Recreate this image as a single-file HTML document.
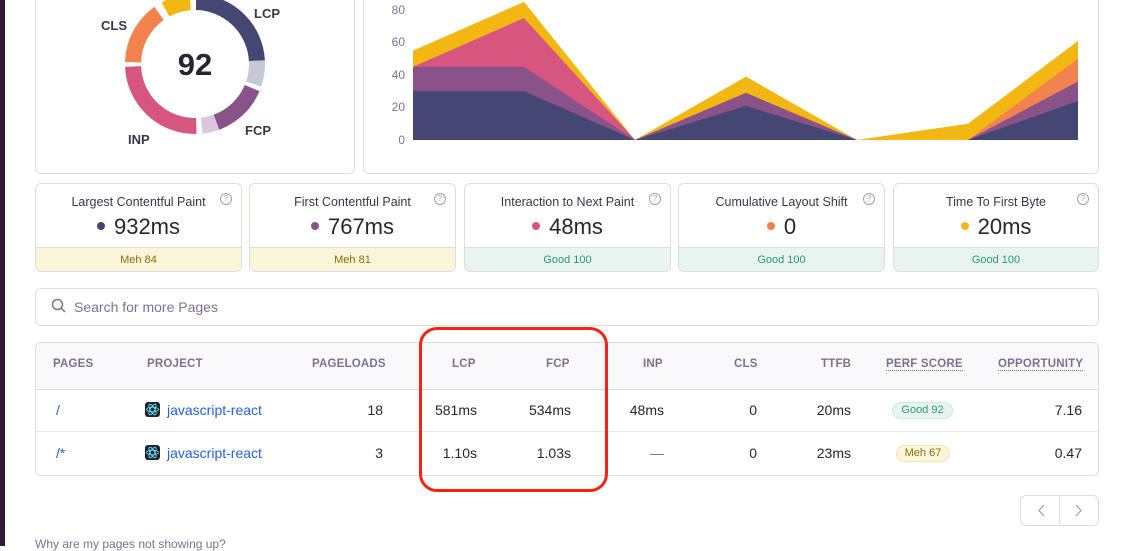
<!DOCTYPE html>
<html><head><meta charset="utf-8"><style>
*{box-sizing:border-box;margin:0;padding:0}
body{width:1123px;height:546px;overflow:hidden;background:#fff;font-family:"Liberation Sans",sans-serif;color:#2b2233;position:relative}
.abs{position:absolute}
.card{position:absolute;border:1px solid #e0dce5;border-radius:6px;background:#fff}
.m{position:absolute;top:183px;height:89px;width:207px;border:1px solid #e0dce5;border-radius:6px;overflow:hidden;text-align:center}
.m .t{font-size:12.5px;color:#3e3446;margin-top:11px}
.m .v{font-size:22px;color:#2b2233;margin-top:5px}
.m .v i{display:inline-block;width:8px;height:8px;border-radius:50%;vertical-align:middle;margin-right:9px;position:relative;top:-2px}
.m .b{position:absolute;left:0;right:0;bottom:0;height:24px;font-size:11px;line-height:24px;border-top:1px solid #e0dce5}
.meh{background:#fbf5d9;color:#8a6d0e}
.good{background:#e7f4f0;color:#2b9a6f}
.m .q{position:absolute;right:9px;top:9px;width:12px;height:12px;border:1px solid #a59fb0;border-radius:50%;font-size:8px;line-height:10px;color:#a59fb0}
.th{position:absolute;top:358px;font-size:11.5px;font-weight:bold;color:#80708f;letter-spacing:.2px}
.td{position:absolute;font-size:14px;color:#2b2233}
.lk{color:#2562d4}
.dot{border-bottom:1px dotted #80708f}
</style></head><body>
<div class="abs" style="left:0;top:0;width:5px;height:546px;background:#2f1937"></div>
<div class="card" style="left:35px;top:-10px;width:320px;height:184px"></div>
<div class="card" style="left:363px;top:-10px;width:736px;height:184px"></div>
<svg class="abs" style="left:0;top:0" width="1123" height="180">
<g transform="rotate(-90 195 64)" fill="none" stroke-width="16">
<circle cx="195" cy="64" r="62" pathLength="360" stroke="#444674" stroke-dasharray="86 360" stroke-dashoffset="-1"/>
<circle cx="195" cy="64" r="62" pathLength="360" stroke="#c6c8d6" stroke-dasharray="22 360" stroke-dashoffset="-87"/>
<circle cx="195" cy="64" r="62" pathLength="360" stroke="#895289" stroke-dasharray="47 360" stroke-dashoffset="-113"/>
<circle cx="195" cy="64" r="62" pathLength="360" stroke="#dbc6db" stroke-dasharray="14 360" stroke-dashoffset="-160"/>
<circle cx="195" cy="64" r="62" pathLength="360" stroke="#d6567f" stroke-dasharray="89 360" stroke-dashoffset="-179"/>
<circle cx="195" cy="64" r="62" pathLength="360" stroke="#f2824e" stroke-dasharray="53 360" stroke-dashoffset="-272"/>
<circle cx="195" cy="64" r="62" pathLength="360" stroke="#f2b712" stroke-dasharray="24 360" stroke-dashoffset="-332"/>
</g>
<text x="195" y="75" text-anchor="middle" font-size="31" font-weight="bold" fill="#2b2233" font-family="Liberation Sans">92</text>
<g font-size="13" font-weight="bold" fill="#3e3446" font-family="Liberation Sans">
<text x="254" y="18">LCP</text><text x="101" y="30">CLS</text><text x="245" y="135">FCP</text><text x="128" y="144">INP</text></g>
<g font-size="12" fill="#80708f" font-family="Liberation Sans" text-anchor="end">
<text x="405" y="14">80</text><text x="405" y="46">60</text><text x="405" y="79">40</text><text x="405" y="111">20</text><text x="405" y="144">0</text></g>
<polygon fill="#f2b712" points="413,50.6 524,1.9 635,140 746,76.6 857,140 968,123.7 1078,40.9 1078,140 413,140"/>
<polygon fill="#f2824e" points="413,66.9 524,18.1 635,140 746,92.9 857,140 968,140 1078,58.7 1078,140 413,140"/>
<polygon fill="#d6567f" points="413,66.9 524,18.1 635,140 746,92.9 857,140 968,140 1078,81.5 1078,140 413,140"/>
<polygon fill="#895289" points="413,66.9 524,66.9 635,140 746,92.9 857,140 968,140 1078,81.5 1078,140 413,140"/>
<polygon fill="#444674" points="413,91.2 524,91.2 635,140 746,105.9 857,140 968,140 1078,101 1078,140 413,140"/>
</svg>

<div class="m" style="left:35px"><div class="q">?</div><div class="t">Largest Contentful Paint</div><div class="v"><i style="background:#444674"></i>932ms</div><div class="b meh">Meh 84</div></div>
<div class="m" style="left:249px"><div class="q">?</div><div class="t">First Contentful Paint</div><div class="v"><i style="background:#895289"></i>767ms</div><div class="b meh">Meh 81</div></div>
<div class="m" style="left:464px"><div class="q">?</div><div class="t">Interaction to Next Paint</div><div class="v"><i style="background:#d6567f"></i>48ms</div><div class="b good">Good 100</div></div>
<div class="m" style="left:678px"><div class="q">?</div><div class="t">Cumulative Layout Shift</div><div class="v"><i style="background:#f2824e"></i>0</div><div class="b good">Good 100</div></div>
<div class="m" style="left:893px;width:206px"><div class="q">?</div><div class="t">Time To First Byte</div><div class="v"><i style="background:#f2b712"></i>20ms</div><div class="b good">Good 100</div></div>

<div class="card" style="left:35px;top:288px;width:1064px;height:38px"></div>
<svg class="abs" style="left:51px;top:298px" width="16" height="16"><circle cx="6.5" cy="6.5" r="5" fill="none" stroke="#80708f" stroke-width="1.5"/><line x1="10" y1="10" x2="14" y2="14" stroke="#80708f" stroke-width="1.5"/></svg>
<div class="abs" style="left:74px;top:299px;font-size:14px;color:#80708f">Search for more Pages</div>

<div class="card" style="left:35px;top:342px;width:1064px;height:134px;overflow:hidden">
<div style="height:47px;background:#f9f8fb;border-bottom:1px solid #e0dce5"></div>
<div style="height:42px;border-bottom:1px solid #e9e6ee"></div></div>
<div class="th" style="left:53px">PAGES</div>
<div class="th" style="left:147px">PROJECT</div>
<div class="th" style="left:312px">PAGELOADS</div>
<div class="th" style="left:452px">LCP</div>
<div class="th" style="left:546px">FCP</div>
<div class="th" style="left:643px">INP</div>
<div class="th" style="left:734px">CLS</div>
<div class="th" style="left:821px">TTFB</div>
<div class="th dot" style="left:886px">PERF SCORE</div>
<div class="th dot" style="left:998px">OPPORTUNITY</div>

<div class="td lk" style="left:56px;top:402px">/</div>
<div class="td lk" style="left:56px;top:445px">/*</div>
<svg class="abs" style="left:145px;top:402px" width="15" height="15"><rect width="15" height="15" rx="3" fill="#20232a"/><g fill="none" stroke="#61dafb" stroke-width=".9"><ellipse cx="7.5" cy="7.5" rx="6" ry="2.3"/><ellipse cx="7.5" cy="7.5" rx="6" ry="2.3" transform="rotate(60 7.5 7.5)"/><ellipse cx="7.5" cy="7.5" rx="6" ry="2.3" transform="rotate(-60 7.5 7.5)"/></g></svg>
<svg class="abs" style="left:145px;top:445px" width="15" height="15"><rect width="15" height="15" rx="3" fill="#20232a"/><g fill="none" stroke="#61dafb" stroke-width=".9"><ellipse cx="7.5" cy="7.5" rx="6" ry="2.3"/><ellipse cx="7.5" cy="7.5" rx="6" ry="2.3" transform="rotate(60 7.5 7.5)"/><ellipse cx="7.5" cy="7.5" rx="6" ry="2.3" transform="rotate(-60 7.5 7.5)"/></g></svg>
<div class="td lk" style="left:167px;top:402px">javascript-react</div>
<div class="td lk" style="left:167px;top:445px">javascript-react</div>

<div class="td" style="right:740px;top:402px">18</div>
<div class="td" style="right:740px;top:445px">3</div>
<div class="td" style="right:646px;top:402px">581ms</div>
<div class="td" style="right:646px;top:445px">1.10s</div>
<div class="td" style="right:552px;top:402px">534ms</div>
<div class="td" style="right:552px;top:445px">1.03s</div>
<div class="td" style="right:459px;top:402px">48ms</div>
<div class="td" style="right:459px;top:445px;color:#80708f">—</div>
<div class="td" style="right:366px;top:402px">0</div>
<div class="td" style="right:366px;top:445px">0</div>
<div class="td" style="right:272px;top:402px">20ms</div>
<div class="td" style="right:272px;top:445px">23ms</div>
<div class="abs" style="left:892px;top:402px;width:61px;height:17px;border-radius:9px;background:#e7f4f0;border:1px solid #cfeade;color:#2b9a6f;font-size:11px;text-align:center;line-height:15px">Good 92</div>
<div class="abs" style="left:896px;top:445px;width:54px;height:17px;border-radius:9px;background:#fbf5d9;border:1px solid #f1e6b0;color:#8a6d0e;font-size:11px;text-align:center;line-height:15px">Meh 67</div>
<div class="td" style="right:41px;top:402px">7.16</div>
<div class="td" style="right:41px;top:445px">0.47</div>

<div class="abs" style="left:419px;top:327px;width:189px;height:165px;border:3.5px solid #f5230f;border-radius:18px"></div>

<div class="card" style="left:1020px;top:495px;width:79px;height:31px"></div>
<div class="abs" style="left:1059px;top:496px;width:1px;height:29px;background:#e0dce5"></div>
<svg class="abs" style="left:1020px;top:495px" width="79" height="31"><path d="M24 10 L19 15.5 L24 21" fill="none" stroke="#a59fb0" stroke-width="1.3"/><path d="M56 10 L61 15.5 L56 21" fill="none" stroke="#a59fb0" stroke-width="1.3"/></svg>
<div class="abs" style="left:35px;top:537px;font-size:12px;color:#80708f">Why are my pages not showing up?</div>
</body></html>
